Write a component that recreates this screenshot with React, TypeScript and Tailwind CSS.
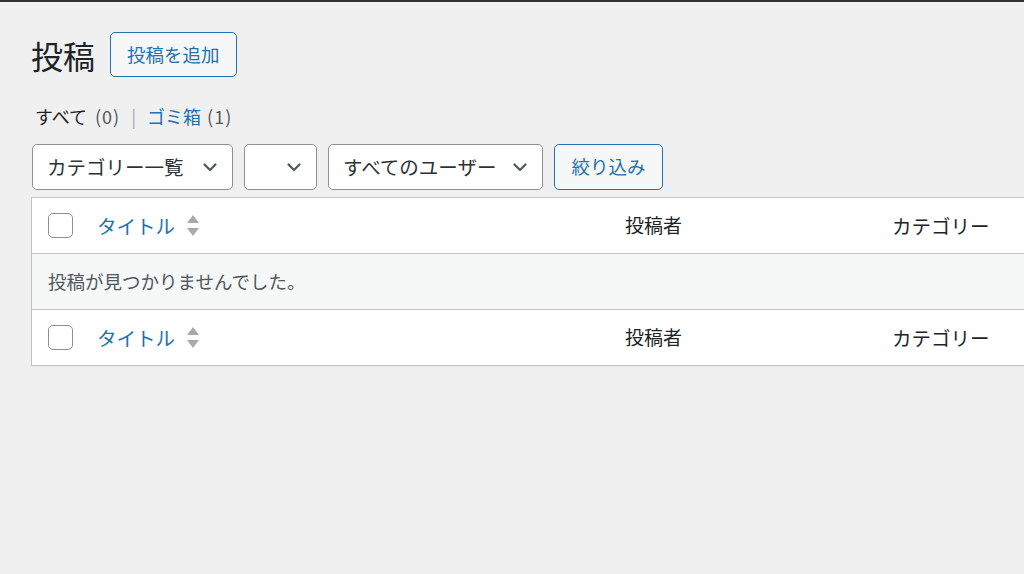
import React from "react";

const font = { fontFamily: '"Noto Sans CJK JP", "Noto Sans", sans-serif' };

function Chevron() {
  return (
    <svg width="20" height="20" viewBox="0 0 20 20" className="shrink-0">
      <path d="M4.5 7.5l5.5 5.5 5.5-5.5" fill="none" stroke="#50575e" strokeWidth="2.2" strokeLinecap="round" strokeLinejoin="round" />
    </svg>
  );
}

function SortIcon() {
  return (
    <svg width="14" height="26" viewBox="0 0 14 26" className="ml-[11px]">
      <path d="M7 2l6 8H1z" fill="#a7aaad" />
      <path d="M1 15h12l-6 8z" fill="#a7aaad" />
    </svg>
  );
}

function Select({ label, width }: { label: string; width: string }) {
  return (
    <div
      className={`flex h-[46px] ${width} items-center justify-between rounded-[5px] border border-[#8c8f94] bg-white pr-[12px] pl-[14px] text-[19.5px] text-[#2c3338]`}
    >
      <span>{label}</span>
      <Chevron />
    </div>
  );
}

function HeaderRow() {
  return (
    <div className="flex h-[55px] items-center bg-white">
      <div className="w-[65px] shrink-0 pl-[16px]">
        <div className="h-[25px] w-[25px] rounded-[5px] border border-[#8c8f94] bg-white" />
      </div>
      <div className="flex w-[528px] shrink-0 items-center text-[19.5px] text-[#2271b1]">
        タイトル
        <SortIcon />
      </div>
      <div className="w-[267px] shrink-0 text-[19px] text-[#1d2327]">投稿者</div>
      <div className="shrink-0 text-[19.5px] text-[#1d2327]">カテゴリー</div>
    </div>
  );
}

export default function App() {
  return (
    <div className="h-[574px] w-[1024px] overflow-hidden bg-[#f0f0f1]" style={font}>
      <div className="h-[2px] bg-[#2c3338]" />
      <div className="pl-[31px]">
        <div className="mt-[30px] flex items-center gap-[15px]">
          <h1 className="text-[32px] leading-none text-[#1d2327]">投稿</h1>
          <button className="flex h-[45px] items-center rounded-[5px] border border-[#2271b1] bg-[#f6f7f7] px-[16px] text-[18.5px] text-[#2271b1]">
            投稿を追加
          </button>
        </div>

        <div className="mt-[24px] flex items-center pl-[4px] text-[18px] leading-[30px]">
          <span className="text-[#1d2327]">すべて</span>
          <span className="ml-[8px] tracking-[1px] text-[#50575e]">(0)</span>
          <span className="mx-[11px] text-[#a7aaad]">|</span>
          <span className="text-[#2271b1]">ゴミ箱</span>
          <span className="ml-[6px] tracking-[1px] text-[#50575e]">(1)</span>
        </div>

        <div className="mt-[13px] flex items-center gap-[11px] pl-px">
          <Select label="カテゴリー一覧" width="w-[201px]" />
          <Select label="" width="w-[73px]" />
          <Select label="すべてのユーザー" width="w-[215px]" />
          <button className="flex h-[46px] w-[109px] items-center justify-center rounded-[5px] border border-[#2271b1] bg-[#f6f7f7] text-[18.5px] text-[#2271b1]">
            絞り込み
          </button>
        </div>

        <div className="mt-[7px] w-[1020px] border border-[#c3c4c7] shadow-[0_1px_1px_rgba(0,0,0,0.04)]">
          <HeaderRow />
          <div className="flex h-[57px] items-center border-y border-[#c3c4c7] bg-[#f6f7f7] pl-[16px] text-[18.5px] text-[#50575e]">
            投稿が見つかりませんでした。
          </div>
          <HeaderRow />
        </div>
      </div>
    </div>
  );
}
